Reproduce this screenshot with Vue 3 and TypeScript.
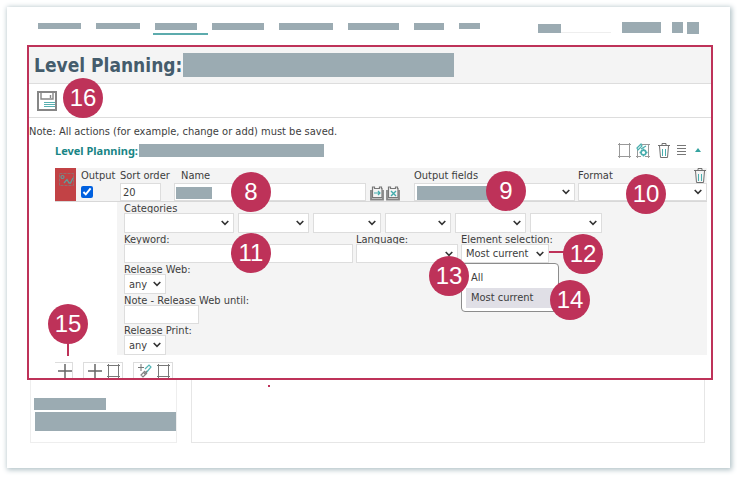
<script setup lang="ts">
import { ref } from 'vue'

interface Bar { w: number; h: number; active?: boolean }

const nav: Bar[] = [
  { w: 43, h: 6 },
  { w: 44, h: 6 },
  { w: 42, h: 7, active: true },
  { w: 52, h: 7 },
  { w: 54, h: 7 },
  { w: 51, h: 7 },
  { w: 30, h: 7 },
  { w: 21, h: 6 },
]
const categories: string[] = ['1', '2', '3', '4', '5', '6']
const options: string[] = ['All', 'Most current']
const selection = ref('Most current')
const output = ref(true)
const sortOrder = ref('20')
</script>

<template>
  <main class="card">
    <header class="top">
      <nav class="nav" aria-label="Main">
        <a v-for="(b, i) in nav" :key="i" href="#" :class="{ active: b.active }">
          <span class="bar" :style="{ width: b.w + 'px', height: b.h + 'px' }"></span>
        </a>
      </nav>
      <div class="tools">
        <div class="search"><span class="bar"></span></div>
        <span class="bar user"></span>
        <span class="bar small"></span>
        <span class="bar square"></span>
      </div>
    </header>

    <section class="frame">
      <div class="title">
        <h1>Level Planning:</h1>
        <span class="bar"></span>
      </div>
      <div class="toolbar">
        <button class="icon" aria-label="Save">
          <svg width="20" height="20" viewBox="0 0 20 20" fill="none">
            <path d="M1 1h18v18H1z" stroke="#868686" stroke-width="2" />
            <path d="M4 1v7h12V1M13.5 4v3" stroke="#868686" stroke-width="1.4" />
            <path d="M7 11.500h11M7 13.500h11M7 15.500h11" stroke="#58b0b0" stroke-width="1" />
          </svg>
        </button>
        <span class="badge b16">16</span>
      </div>
      <p class="note">Note: All actions (for example, change or add) must be saved.</p>

      <div class="level">
        <div class="level-head">
          <h2>Level Planning:</h2>
          <span class="bar"></span>
          <div class="actions">
            <button class="icon" aria-label="Frame">
              <svg width="13" height="15" viewBox="0 0 13 15" fill="none" stroke="#999">
                <path d="M1.500 0v15M11.500 0v15M0 1.500h13M0 13.500h13" />
              </svg>
            </button>
            <button class="icon" aria-label="Frame settings">
              <svg width="14" height="15" viewBox="0 0 14 15" fill="none">
                <path d="M1.500 7v8M12.500 1v14M6 1.500h8M0 13.500h5M9 13.500h5" stroke="#999" />
                <path d="M1 5l4-4 1 2-4 4zM5 6l5-3" stroke="#4aaeae" stroke-width="1.200" />
                <circle cx="7.500" cy="9.500" r="2.400" stroke="#4aaeae" stroke-width="1.600" />
                <path d="M7.500 5.500v1.500M7.500 12v1.500M3.500 9.500h1.500M10 9.500h1.500" stroke="#4aaeae" stroke-width="1.400" />
              </svg>
            </button>
            <button class="icon trash" aria-label="Delete level">
              <svg width="12" height="15" viewBox="0 0 12 15" fill="none">
                <path d="M0 2.500h12M4 2V.5h4V2M1.500 3l1 11.500h7L10.500 3" stroke="#707070" />
                <path d="M4.500 6v7M7.500 6v7" stroke="#4aaeae" />
              </svg>
            </button>
            <button class="icon" aria-label="List">
              <svg width="9" height="12" viewBox="0 0 9 12" stroke="#777"><path d="M0 1.500h9M0 4.500h9M0 7.500h9M0 10.500h9" /></svg>
            </button>
            <button class="icon collapse" aria-label="Collapse">
              <svg width="6" height="4" viewBox="0 0 6 4"><path d="M3 0l3 4H0z" fill="#35a3a0" /></svg>
            </button>
          </div>
        </div>

        <div class="row">
          <div class="thumb">
            <svg width="15" height="13" viewBox="0 0 15 13" fill="none" stroke="#5f9d9a">
              <path d="M.5.500h14v12H.500z" stroke="#907070" stroke-dasharray="3 1" />
              <circle cx="3.500" cy="4" r="1.500" stroke-width="1.200" />
              <path d="M5 10l3-3.500 2 3.500h1.500l2.500-5" stroke-width="1.300" />
            </svg>
          </div>
          <div class="cell c-out">
            <label for="out">Output</label>
            <input id="out" v-model="output" type="checkbox" />
          </div>
          <div class="cell c-sort">
            <label for="sort">Sort order</label>
            <input id="sort" v-model="sortOrder" class="field" type="text" />
          </div>
          <div class="cell c-name">
            <label for="name">Name</label>
            <div class="redacted">
              <input id="name" class="field" type="text" />
              <span class="bar"></span>
            </div>
            <span class="badge b8">8</span>
          </div>
          <div class="pair">
            <button v-for="kind in ['Assign', 'Remove']" :key="kind" class="icon" :aria-label="kind">
              <svg width="14" height="15" viewBox="0 0 14 15" fill="none">
                <path d="M2.500 2.500V1h2v1.500h5V1h2v1.500H12v9H2.500z" stroke="#777" stroke-width="1.200" />
                <path d="M1 4v9.500h12V4" stroke="#858585" stroke-width="1.800" />
                <path v-if="kind === 'Assign'" d="M4 7h6M8 5l2 2-2 2" stroke="#43acac" stroke-width="1.200" />
                <path v-else d="M5 5l5 5M10 5l-5 5" stroke="#43acac" stroke-width="1.400" />
              </svg>
            </button>
          </div>
          <div class="cell c-fields">
            <label for="fields">Output fields</label>
            <div class="redacted">
              <select id="fields" class="field"><option></option></select>
              <span class="bar"></span>
            </div>
            <span class="badge b9">9</span>
          </div>
          <div class="cell c-format">
            <label for="format">Format</label>
            <select id="format" class="field"><option></option></select>
            <button class="icon row-trash" aria-label="Delete row">
              <svg width="12" height="15" viewBox="0 0 12 15" fill="none">
                <path d="M0 2.500h12M4 2V.5h4V2M1.500 3l1 11.500h7L10.500 3" stroke="#707070" />
                <path d="M4.500 6v7M7.500 6v7" stroke="#4aaeae" />
              </svg>
            </button>
            <span class="badge b10">10</span>
          </div>
        </div>

        <div class="details">
          <div class="group">
            <label for="cat1">Categories</label>
            <div class="cats">
              <select v-for="c in categories" :id="'cat' + c" :key="c" class="field" :aria-label="'Category ' + c">
                <option></option>
              </select>
            </div>
          </div>
          <div class="filters">
            <div class="cell">
              <label for="keyword">Keyword:</label>
              <input id="keyword" class="field" type="text" />
              <span class="badge b11">11</span>
            </div>
            <div class="cell">
              <label for="lang">Language:</label>
              <select id="lang" class="field"><option></option></select>
            </div>
            <div class="cell">
              <label for="element">Element selection:</label>
              <select id="element" v-model="selection" class="field text">
                <option v-for="o in options" :key="o">{{ o }}</option>
              </select>
              <ul class="menu" role="listbox" aria-label="Element selection">
                <li v-for="o in options" :key="o" role="option" :aria-selected="o === selection" @click="selection = o">{{ o }}</li>
              </ul>
              <span class="badge b12">12</span>
              <span class="badge b13">13</span>
              <span class="badge b14">14</span>
            </div>
          </div>
          <div class="group">
            <label for="web">Release Web:</label>
            <select id="web" class="field text any"><option>any</option></select>
          </div>
          <div class="group">
            <label for="until">Note - Release Web until:</label>
            <input id="until" class="field date" type="text" />
          </div>
          <div class="group">
            <label for="print">Release Print:</label>
            <select id="print" class="field text any"><option>any</option></select>
          </div>
        </div>

        <div class="adders">
          <button class="add first" aria-label="Add">
            <svg width="14" height="14" viewBox="0 0 14 14" stroke="#666" stroke-width="1.500"><path d="M0 7h14M7 0v14" /></svg>
          </button>
          <button class="add" aria-label="Add frame">
            <svg width="14" height="14" viewBox="0 0 14 14" stroke="#666" stroke-width="1.500"><path d="M0 7h14M7 0v14" /></svg>
            <svg width="13" height="14" viewBox="0 0 13 14" fill="none" stroke="#777"><path d="M1.500 0v14M11.500 0v14M0 1.500h13M0 12.500h13" /></svg>
          </button>
          <button class="add" aria-label="Add linked frame">
            <svg width="14" height="14" viewBox="0 0 14 14" fill="none">
              <path d="M0 3.500h6M3 0v7" stroke="#777" />
              <path d="M7 5l4-4 2 2-5 6-1-1" stroke="#55b5b5" stroke-width="1.200" />
              <path d="M7 7l-4 4 2 2 4-4M6 10l3-3" stroke="#858585" stroke-width="1.200" />
            </svg>
            <svg width="13" height="14" viewBox="0 0 13 14" fill="none" stroke="#777"><path d="M1.500 0v14M11.500 0v14M0 1.500h13M0 12.500h13" /></svg>
          </button>
          <span class="badge b15">15</span>
        </div>
      </div>
    </section>

    <div class="below">
      <aside class="side">
        <span class="bar"></span>
        <span class="bar wide"></span>
      </aside>
      <section class="content"><span class="dot"></span></section>
    </div>
  </main>
</template>

<style>
body {
  background: #fff;
}
</style>

<style scoped>
* {
  box-sizing: border-box;
}
.card {
  margin: 7px 10px 9px 7px;
  padding: 15px 17px 25px 20px;
  background: #fff;
  box-shadow: 1px 1px 5px 1px #b3c3c8;
  font: 11px/15px 'DejaVu Sans Condensed', 'DejaVu Sans', sans-serif;
  color: #3d3d3d;
  display: flow-root;
}
.bar {
  display: block;
  flex: none;
  background: #9babb2;
}
.top {
  display: flex;
  justify-content: space-between;
  height: 23px;
  padding: 0 14px 0 11px;
}
.nav {
  display: flex;
  gap: 15px;
}
.nav a {
  height: 13px;
  padding-top: 1px;
}
.nav .active {
  margin: 0 -11px 0 -2px;
  padding: 1px 11px 0 2px;
  border-bottom: 2px solid #5cabad;
}
.tools {
  display: flex;
}
.search {
  width: 73px;
  height: 11px;
  padding-top: 2px;
  margin-right: 11px;
  border-bottom: 1px solid #eee;
}
.search .bar {
  width: 23px;
  height: 9px;
}
.user {
  width: 39px;
  height: 11px;
  margin-right: 11px;
}
.small {
  width: 11px;
  height: 11px;
  margin-right: 4px;
}
.square {
  width: 12px;
  height: 12px;
}
.frame {
  border: 2px solid #be3259;
}
.title {
  display: flex;
  align-items: center;
  gap: 2px;
  height: 37px;
  padding-left: 5px;
  background: #f4f4f4;
  border-bottom: 1px solid #ddd;
}
h1,
h2,
p,
ul {
  margin: 0;
  padding: 0;
}
h1 {
  width: 147px;
  white-space: nowrap;
  font-size: 19px;
  line-height: 24px;
  color: #445c6c;
}
.title .bar {
  width: 271px;
  height: 24px;
}
.toolbar {
  position: relative;
  height: 34px;
  padding: 7px 8px;
  border-bottom: 1px solid #ddd;
}
.icon {
  display: block;
  padding: 0;
  border: 0;
  background: none;
}
.icon svg,
.thumb svg {
  display: block;
}
.note {
  height: 24px;
  padding-top: 6px;
}
.level {
  padding: 0 4px 0 26px;
}
.level-head {
  display: flex;
  align-items: center;
  height: 26px;
  padding-bottom: 10px;
}
h2 {
  width: 84px;
  white-space: nowrap;
  font: bold 11px/15px 'Noto Sans', sans-serif;
  color: #188585;
}
.level-head .bar {
  width: 185px;
  height: 13px;
}
.actions {
  display: flex;
  align-items: center;
  gap: 5px;
  margin-left: auto;
  padding-right: 6px;
}
.actions .trash {
  margin: 0 2px 0 3px;
}
.collapse {
  margin-left: 4px;
}
.row {
  display: flex;
  height: 34px;
  background: #f4f4f4;
  border-bottom: 1px solid #d8d8d8;
}
.thumb {
  width: 21px;
  padding: 5px 0 0 4px;
  background: #c24245;
}
.cell {
  position: relative;
  display: grid;
}
.row .cell {
  grid-template-rows: 15px 18px;
}
label {
  white-space: nowrap;
}
.field {
  width: 100%;
  min-width: 0;
  height: 100%;
  margin: 0;
  padding: 0 2px;
  border: 1px solid #ddd;
  border-radius: 0;
  background-color: #fff;
  font: inherit;
  color: inherit;
}
select.field {
  appearance: none;
  padding: 0 4px;
  background-image: url("data:image/svg+xml,%3Csvg xmlns='http://www.w3.org/2000/svg' width='8' height='6' fill='none' stroke='%23333' stroke-width='1.6'%3E%3Cpath d='M.7 1L4 4.300 7.300 1'/%3E%3C/svg%3E");
  background-repeat: no-repeat;
  background-position: right 4px center;
}
.c-out {
  width: 39px;
  margin-left: 5px;
}
.c-out input {
  width: 12px;
  height: 12px;
  margin: 3px 0 0;
  accent-color: #0060df;
}
.c-sort {
  width: 50px;
}
.c-sort .field {
  width: 41px;
}
.c-name {
  flex: 192 1 0;
  margin-left: 4px;
}
.c-name label {
  padding-left: 7px;
}
.redacted {
  position: relative;
}
.redacted .bar {
  position: absolute;
  top: 4px;
  left: 2px;
  width: 36px;
  height: 12px;
}
.c-fields .bar {
  top: 3px;
  left: 3px;
  width: 80px;
  height: 14px;
}
.pair {
  display: flex;
  gap: 2px;
  margin: 18px 14px 0 4px;
}
.c-fields {
  flex: 161 1 0;
}
.c-format {
  flex: 129 1 0;
  margin-left: 3px;
}
.row-trash {
  position: absolute;
  top: 0;
  right: 1px;
}
.details {
  margin-left: 62px;
  padding-left: 7px;
  background: #f4f4f4;
}
.details label {
  display: block;
  height: 11px;
  line-height: 13px;
}
.group select.field {
  display: block;
  height: 20px;
}
.cats {
  position: relative;
  display: grid;
  grid-template-columns: 110fr 71fr 68fr 66fr 71fr 72fr;
  gap: 4px;
  margin-right: 105px;
}
.filters {
  display: grid;
  grid-template-columns: minmax(0, 229fr) minmax(0, 102fr) minmax(0, 88fr);
  gap: 3px;
  margin-right: 158px;
}
.filters .cell {
  grid-template-rows: 11px 19px;
  grid-template-columns: minmax(0, 1fr);
}
.filters .field {
  position: relative;
}
select.field.any {
  width: 42px;
}
.date {
  display: block;
  width: 75px;
  height: 19px;
}
.group .field {
  position: relative;
}
.menu {
  position: absolute;
  top: 30px;
  left: 0;
  width: 98px;
  height: 49px;
  padding: 4px;
  border: 1px solid #8c8c8c;
  border-radius: 4px;
  background: #fff;
  list-style: none;
}
.menu li {
  height: 20px;
  padding-left: 5px;
  line-height: 20px;
}
.menu li[aria-selected='true'] {
  background: #e0dfe6;
}
.adders {
  position: relative;
  display: flex;
  gap: 10px;
  height: 23px;
  padding-top: 7px;
}
.add {
  display: flex;
  gap: 5px;
  padding: 1px 2px 0 4px;
  border: 1px solid #ddd;
  border-bottom: 0;
  background: #fff;
}
.add.first {
  padding: 1px 0 0 3px;
  border-left: 0;
}
.below {
  display: flex;
  gap: 14px;
  height: 63px;
  padding: 0 8px 0 3px;
}
.side {
  width: 147px;
  padding: 18px 0 0 3px;
  border: 1px solid #eee;
  border-top: 0;
}
.side .bar {
  width: 72px;
  height: 12px;
}
.side .wide {
  width: 141px;
  height: 19px;
  margin: 2px 0 0 1px;
}
.content {
  flex: 1;
  padding: 5px 0 0 76px;
  border: 1px solid #e6e6e6;
  border-top: 0;
}
.dot {
  display: block;
  width: 2px;
  height: 2px;
  background: #be3259;
}
.badge {
  position: absolute;
  z-index: 2;
  width: 40px;
  height: 40px;
  border-radius: 50%;
  background: #be3259;
  color: #fff;
  font: 24px/40px 'Liberation Sans', sans-serif;
  text-align: center;
}
.b16 { left: 34px; top: -6px; }
.b8 { left: 57px; top: 4px; }
.b9 { left: 72px; top: 3px; }
.b10 { left: 48px; top: 6px; }
.b11 { left: 107px; top: 0; }
.b12 { left: 102px; top: 1px; }
.b13 { left: -32px; top: 23px; }
.b14 { left: 89px; top: 47px; }
.b15 { left: -7px; top: -51px; }
.b12::before,
.b15::before {
  content: '';
  position: absolute;
  background: #be3259;
}
.b12::before {
  top: 17px;
  right: 38px;
  width: 16px;
  height: 2px;
}
.b15::before {
  top: 38px;
  left: 19px;
  width: 2px;
  height: 14px;
}
</style>
